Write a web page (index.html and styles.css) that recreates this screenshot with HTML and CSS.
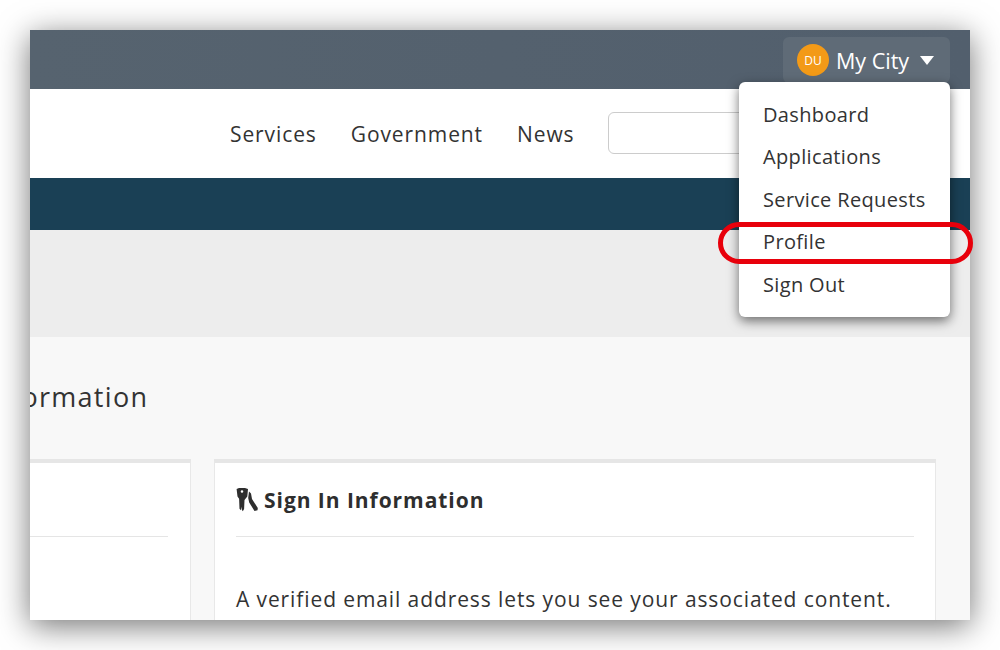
FILE: index.html
```html
<!DOCTYPE html>
<html lang="en">
<head>
<meta charset="utf-8">
<title>My City Profile</title>
<link rel="stylesheet" href="styles.css">
</head>
<body>
<div class="window">
  <header class="topbar">
    <button class="account">
      <span class="avatar">DU</span>
      <span class="account-name">My City</span>
      <svg class="caret" width="14" height="9" viewBox="0 0 14 9"><path d="M0 0h14L7 9z" fill="#fff"/></svg>
    </button>
  </header>
  <nav class="nav">
    <a class="nav-link">Services</a>
    <a class="nav-link">Government</a>
    <a class="nav-link">News</a>
    <div class="search"></div>
  </nav>
  <div class="band"></div>
  <div class="hero"></div>
  <main class="content">
    <h1 class="title">Profile Information</h1>
    <div class="cards">
      <section class="card card-left">
        <div class="card-head"></div>
      </section>
      <section class="card card-right">
        <h2 class="card-title">
          <svg class="keys" width="22" height="24" viewBox="0 0 22 24"><path fill="#2e2e2e" fill-rule="evenodd" d="M.6 1 3 0h6l3 1-.7 7.500-2.800 3.500-.4 9-1.300 2.300-1-1.500-.3-3-.6 3.500-1.400-1.500-.4-10L1.500 8.500zM6 2.200a1.300 1.300 0 1 0 0 2.600 1.300 1.300 0 0 0 0-2.600z"/><path fill="#2e2e2e" d="m13 3.500 2 2 1 5.500 5.800 9-.3 2.300-3 .7-5.300-8.500-1-4.500z"/></svg>
          Sign In Information
        </h2>
        <p class="card-text">A verified email address lets you see your associated content.</p>
      </section>
    </div>
  </main>
  <ul class="menu">
    <li class="menu-item">Dashboard</li>
    <li class="menu-item">Applications</li>
    <li class="menu-item">Service Requests</li>
    <li class="menu-item">Profile</li>
    <li class="menu-item">Sign Out</li>
  </ul>
  <div class="ring"></div>
</div>
</body>
</html>
```
FILE: styles.css
```css
* { box-sizing: border-box; }
html, body { margin: 0; height: 650px; background: #fff; overflow: hidden; }
body { padding: 30px; font-family: "Open Sans", "Liberation Sans", sans-serif; color: #333; }
.window {
  position: relative;
  width: 940px;
  height: 590px;
  display: flex;
  flex-direction: column;
  box-shadow: 0 6px 30px rgba(0, 0, 0, 0.55);
  background: #f8f8f8;
}
.topbar {
  height: 59px;
  flex: none;
  background: linear-gradient(90deg, #56636f, #525f6d);
  display: flex;
  justify-content: flex-end;
  padding: 7px 20px 0 0;
}
.account {
  width: 167px;
  height: 46px;
  border: 0;
  border-radius: 6px;
  background: #5f6b77;
  display: flex;
  align-items: center;
  padding: 0 0 0 14px;
  font-family: inherit;
  color: #fff;
}
.avatar {
  flex: none;
  width: 32px;
  height: 32px;
  border-radius: 50%;
  background: #f39a17;
  color: #fff;
  font-size: 12px;
  display: flex;
  align-items: center;
  justify-content: center;
}
.account-name { font-size: 21.500px; margin-left: 7px; white-space: nowrap; }
.caret { flex: none; margin-left: 11px; }
.nav {
  height: 89px;
  flex: none;
  background: #fff;
  display: flex;
  align-items: center;
  padding-left: 200px;
  gap: 34px;
}
.nav-link { font-size: 21px; letter-spacing: 0.900px; color: #333; }
.search {
  flex: none;
  width: 200px;
  height: 42px;
  margin-top: -2px;
  border: 1px solid #ccc;
  border-radius: 6px;
  background: #fff;
}
.band { height: 52px; flex: none; background: #1a4055; }
.hero { height: 107px; flex: none; background: #ededed; }
.content { flex: 1; min-height: 0; overflow: hidden; background: #f8f8f8; }
.title {
  margin: 41px 0 0 -144.500px;
  font-size: 27px;
  line-height: 38px;
  font-weight: 400;
  letter-spacing: 1.300px;
  color: #333;
  white-space: nowrap;
}
.cards { display: flex; gap: 23px; margin-top: 43px; }
.card {
  flex: none;
  height: 300px;
  background: #fff;
  border: 1px solid #e8e8e8;
  border-top: 4px solid #e6e6e6;
}
.card-left { width: 161px; border-left: 0; }
.card-head { height: 74px; margin-right: 22px; border-bottom: 1px solid #e5e5e5; }
.card-right { width: 722px; padding: 0 21px; }
.card-title {
  height: 74px;
  margin: 0;
  display: flex;
  align-items: center;
  gap: 6px;
  font-size: 21px;
  font-weight: 700;
  letter-spacing: 0.950px;
  color: #2e2e2e;
  border-bottom: 1px solid #e5e5e5;
}
.keys { flex: none; }
.card-text { margin: 47px 0 0; font-size: 21px; line-height: 30px; letter-spacing: 0.900px; color: #333; white-space: nowrap; }
.menu {
  position: absolute;
  top: 52px;
  left: 709px;
  width: 211px;
  height: 235px;
  margin: 0;
  padding: 11.500px 0;
  list-style: none;
  background: #fff;
  border-radius: 6px;
  box-shadow: 0 4px 12px rgba(0, 0, 0, 0.55);
}
.menu-item { height: 42.600px; line-height: 42.600px; padding-left: 24px; font-size: 20px; letter-spacing: 0.350px; color: #333; white-space: nowrap; }
.ring {
  position: absolute;
  left: 688px;
  top: 192px;
  width: 255px;
  height: 42px;
  border: 5px solid #e8000b;
  border-radius: 21px;
}
```
